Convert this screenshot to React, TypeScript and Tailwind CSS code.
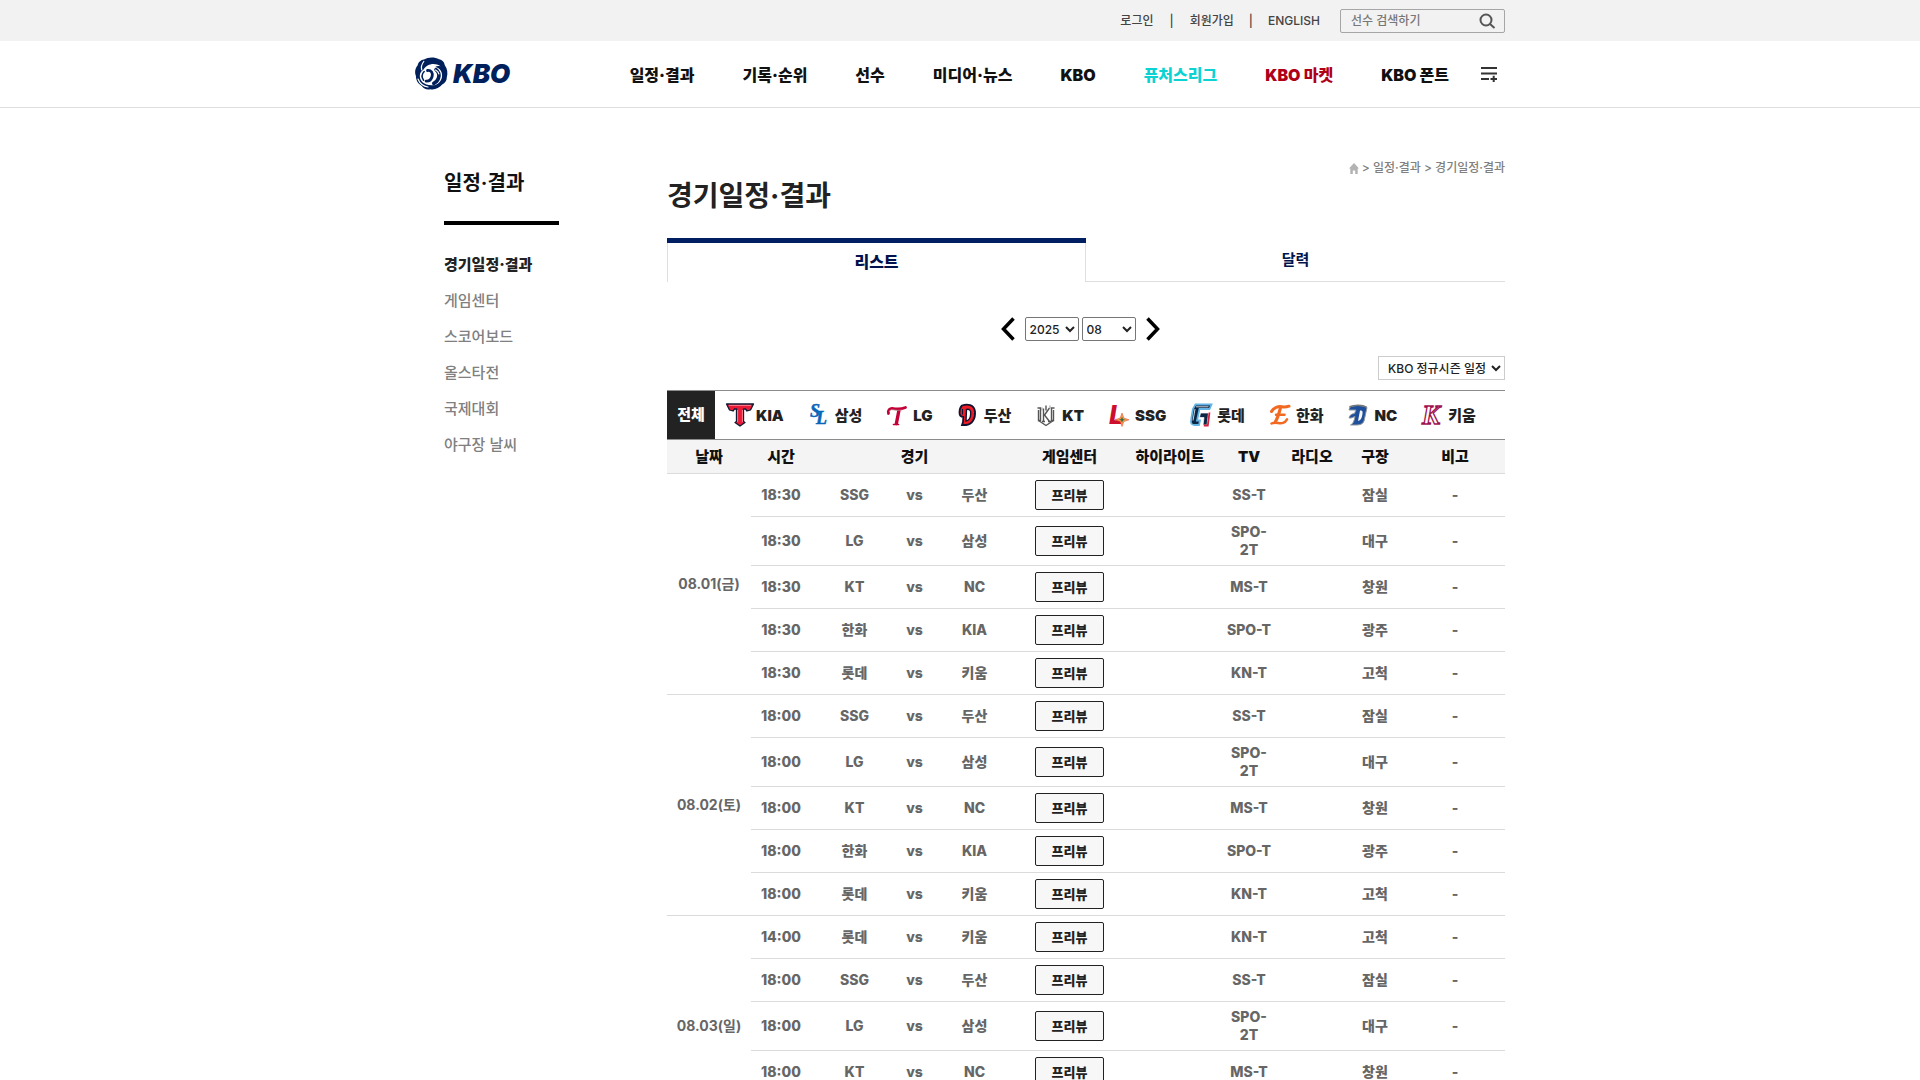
import React from "react";

type Game = { time: string; home: string; away: string; tv: string; park: string };

const fixtures = {
  ssg: { home: "SSG", away: "두산", tv: "SS-T", park: "잠실" },
  lg: { home: "LG", away: "삼성", tv: "SPO-2T", park: "대구" },
  kt: { home: "KT", away: "NC", tv: "MS-T", park: "창원" },
  hanwha: { home: "한화", away: "KIA", tv: "SPO-T", park: "광주" },
  lotte: { home: "롯데", away: "키움", tv: "KN-T", park: "고척" },
};

const days: { date: string; games: Game[] }[] = [
  {
    date: "08.01(금)",
    games: [
      { time: "18:30", ...fixtures.ssg },
      { time: "18:30", ...fixtures.lg },
      { time: "18:30", ...fixtures.kt },
      { time: "18:30", ...fixtures.hanwha },
      { time: "18:30", ...fixtures.lotte },
    ],
  },
  {
    date: "08.02(토)",
    games: [
      { time: "18:00", ...fixtures.ssg },
      { time: "18:00", ...fixtures.lg },
      { time: "18:00", ...fixtures.kt },
      { time: "18:00", ...fixtures.hanwha },
      { time: "18:00", ...fixtures.lotte },
    ],
  },
  {
    date: "08.03(일)",
    games: [
      { time: "14:00", ...fixtures.lotte },
      { time: "18:00", ...fixtures.ssg },
      { time: "18:00", ...fixtures.lg },
      { time: "18:00", ...fixtures.kt },
      { time: "18:00", ...fixtures.hanwha },
    ],
  },
];

const navItems = [
  { label: "일정·결과", tone: "text-[#111]" },
  { label: "기록·순위", tone: "text-[#111]" },
  { label: "선수", tone: "text-[#111]" },
  { label: "미디어·뉴스", tone: "text-[#111]" },
  { label: "KBO", tone: "text-[#111]" },
  { label: "퓨처스리그", tone: "text-[#0bd3d3]" },
  { label: "KBO 마켓", tone: "text-[#b00018]" },
  { label: "KBO 폰트", tone: "text-[#111]" },
];

const sideItems = ["게임센터", "스코어보드", "올스타전", "국제대회", "야구장 날씨"];

const SERIF = "'Liberation Serif', serif";
const SANS = "Inter, sans-serif";

function KboLogo() {
  return (
    <svg width="98" height="34" viewBox="0 0 98 34" role="img" aria-label="KBO" className="overflow-visible">
      <path
        fill="#00205b"
        d="M9 2.500C13-.2 20-.2 24 2.200c3 .3 5.400 3 5.800 6 2.600 3.200 3.200 8 2 12 .2 3-1.800 6-4.600 7.400-3 3.800-7.600 5.400-12 4.600-3.400.8-6.600-.6-8.400-3.200C3 27 .8 23 .9 18.800-.6 15.500.2 11 2.600 8.600 3 5.400 6 2.700 9 2.500Z"
      />
      <path fill="#fff" d="M8.600 12.500c3-5.500 11-7.600 17-3.200-2-.6-4-.4-5.400.6 4.800 1.200 7.600 5 6.800 10-.8 5-5 8.600-10 8.400C9.500 28.500 4.500 24 4.800 18.500c.1-2.400 1.600-4.600 3.800-6Z" />
      <path fill="none" stroke="#00205b" strokeWidth="2.800" strokeLinecap="round" d="M12.500 13.500c3.800-.4 5.600 2.500 4.600 6-.8 3-3 4.800-6 4.600" />
      <path fill="none" stroke="#00205b" strokeWidth="1.500" strokeLinecap="round" d="M9.200 14.500c-2.400 2.500-2.600 6-.6 8.800" />
      <path fill="none" stroke="#00205b" strokeWidth="3.600" strokeLinecap="round" d="M21 12.600c2.800 2.200 3.600 5.400 2.400 8.800-.8 2.400-2.600 4-4.600 5" />
      <path fill="none" stroke="#fff" strokeWidth="1.200" strokeLinecap="round" d="M20.500 13c1.800.8 3 2.200 3.400 4M8.800 4.500C6.400 7.500 6 10.500 6.800 13M3 22c1.800 4.600 5.600 7.400 10 8" />
      <text x="38" y="25.500" fontFamily={SANS} fontSize="26" fontWeight="900" fontStyle="italic" fill="#00205b">
        KBO
      </text>
    </svg>
  );
}

function Badge({ children }: { children: React.ReactNode }) {
  return (
    <svg width="30" height="26" viewBox="0 0 30 26" aria-hidden="true" className="shrink-0 overflow-visible">
      {children}
    </svg>
  );
}

const teams: { name: string; mark: React.ReactNode }[] = [
  {
    name: "KIA",
    mark: (
      <Badge>
        <path
          d="M1.500 2h27l-3 6-3.500 1-1.500-2H18.500v12.500l1.500 1-5 3.500-5-3.500 1.500-1V7H9.500l-1.500 2L4.500 8Z"
          fill="#ea1a36"
          stroke="#0c1a33"
          strokeWidth="1.300"
          strokeLinejoin="round"
        />
        <path d="M4 3.400h22M12.600 8v12M17.400 8v12" stroke="#ff9aa6" strokeWidth=".8" fill="none" />
      </Badge>
    ),
  },
  {
    name: "삼성",
    mark: (
      <Badge>
        <text x="6" y="15" fontFamily={SERIF} fontWeight="700" fontStyle="italic" fontSize="18" fill="#0a66b8" stroke="#0a66b8" strokeWidth=".5">
          S<tspan dx="-4" dy="7">L</tspan>
        </text>
      </Badge>
    ),
  },
  {
    name: "LG",
    mark: (
      <Badge>
        <g fill="none" stroke="#c30037" strokeLinecap="round">
          <path d="M6.500 11.500C5.500 8 8 6 11 6.500c4 .8 8 .9 12.500-1" strokeWidth="2.800" />
          <path d="m17 8-2.600 13.500" strokeWidth="3.400" />
          <path d="M11.500 22.500h5" strokeWidth="1.600" />
        </g>
        <path d="M7.500 10c0-2 1.500-2.600 3.500-2.200 3 .6 6 .8 9 .2" stroke="#b9a0a8" strokeWidth=".7" fill="none" />
      </Badge>
    ),
  },
  {
    name: "두산",
    mark: (
      <Badge>
        <path
          d="M9 3.500c5.500-2 12-.8 13 6 .7 7-3 13-9 13.500H9l1-3 .3-5C8 15 6.500 13.500 6.500 10.500c0-3 1-5.500 2.500-7Z"
          fill="#ed1c24"
          stroke="#131230"
          strokeWidth="1.800"
        />
        <path d="M13.500 7.500c3-.8 4.500 1 4.200 4.500-.2 4-1.800 6.500-4.700 7Z" fill="#fff" stroke="#131230" strokeWidth="1.400" />
        <path d="M9.500 12.500V7" stroke="#131230" strokeWidth="1" />
      </Badge>
    ),
  },
  {
    name: "KT",
    mark: (
      <Badge>
        <g fill="none" stroke="#555" strokeWidth="1.400">
          <path d="M6.500 6h3v12.500h-2V8M23.500 6h-3v12.500h2V8" />
          <path d="M7.500 18.500 15 23.500l7.500-5" />
          <path d="M12.500 6.500v13M15 3.500v5M18.500 6l-5 7 5 6.500M11 19.500h3M17 19.500h3" />
        </g>
        <path d="M11 5.500v3M19 3.500v3" stroke="#999" strokeWidth="1" />
      </Badge>
    ),
  },
  {
    name: "SSG",
    mark: (
      <Badge>
        <text x="5" y="22" fontFamily={SANS} fontSize="26" fontWeight="800" fontStyle="italic" fill="#ce0e2d">
          L
        </text>
        <path d="m18 11 1.800 5 5.200 1.800-5.200 1.800L18 24.500l-1.800-4.900-5.200-1.800 5.200-1.800Z" fill="#f6a04a" stroke="#e0402f" strokeWidth=".5" />
        <path d="m18 14.800.9 2.200 2.100.8-2.100.8-.9 2.200-.9-2.200-2.100-.8 2.100-.8Z" fill="#2f6b45" />
      </Badge>
    ),
  },
  {
    name: "롯데",
    mark: (
      <Badge>
        <path d="M9.500 2.500h16l-2 4.500h-10l-2.500 11.500h3l-1 4.500H8.500c-3 0-4-2-3.400-5l1.800-11Z" fill="#0b2545" stroke="#63b4e4" strokeWidth="1.800" />
        <path d="M10 4.800h12.500M9 7l-2 11.500" stroke="#fff" strokeWidth=".8" fill="none" />
        <path d="M14.500 11H22.500l-1.500 12h-4l1-7.500h-4.500Z" fill="#0b2545" stroke="#fff" strokeWidth=".7" />
        <path d="m23.500 10.500-1.700 13h-4" stroke="#d4213d" strokeWidth="1.800" fill="none" />
      </Badge>
    ),
  },
  {
    name: "한화",
    mark: (
      <Badge>
        <g fill="none" stroke="#f26a21" strokeLinecap="round">
          <path d="M6.500 9.500c2-4 7-5.500 10.500-4.700 2 .5 4.500.3 7-.6" strokeWidth="3" />
          <path d="M15.500 5.500c-1 4-2 9-5 14" strokeWidth="3.200" />
          <path d="M11 12.800h8.500M6.500 21.500c4-2 8 .6 11.500-.6 1.800-.6 3-1.800 4-3.600" strokeWidth="2.500" />
        </g>
      </Badge>
    ),
  },
  {
    name: "NC",
    mark: (
      <Badge>
        <path d="M7 5c5-2 12-2 17 .5L21 19c-1 3-4 4-8 4H7.500c2.500-1 3.800-4 4.500-8.500L8 16H6c1-3 2-4 5.500-4.500L13 8H6Z" fill="#1d4f9c" stroke="#8d949b" strokeWidth="1" />
        <path d="M17 8.500c2.500-.4 3 1 2.400 4-.6 3.500-1.700 6-4.400 6.500Z" fill="#f4f6f8" />
        <path d="M6.500 4.800c5-2 13-2 17 .3" stroke="#777" strokeWidth="1.500" fill="none" />
      </Badge>
    ),
  },
  {
    name: "키움",
    mark: (
      <Badge>
        <text
          x="5"
          y="22"
          fontFamily={SERIF}
          fontSize="27"
          fontWeight="700"
          fontStyle="italic"
          fill="#fff"
          stroke="#a01050"
          strokeWidth="1.300"
        >
          K
        </text>
      </Badge>
    ),
  },
];

const columns = [
  { label: "날짜", width: "w-[84px]" },
  { label: "시간", width: "w-[60px]" },
  { label: "경기", width: "w-[207px]" },
  { label: "게임센터", width: "w-[103px]" },
  { label: "하이라이트", width: "w-[98px]" },
  { label: "TV", width: "w-[60px]" },
  { label: "라디오", width: "w-[66px]" },
  { label: "구장", width: "w-[60px]" },
  { label: "비고", width: "w-[100px]" },
];

function TopBar() {
  return (
    <div className="bg-[#f2f2f2]">
      <div className="mx-auto flex h-[41px] max-w-[1090px] items-center justify-end text-[12px] font-medium text-[#444]">
        <a href="#login">로그인</a>
        <span className="mx-4">|</span>
        <a href="#join">회원가입</a>
        <span className="mx-[15px]">|</span>
        <a href="#english">ENGLISH</a>
        <form className="ml-5 flex h-6 w-[165px] items-center rounded-[2px] border border-[#a6a6a6] pr-2 pl-2.5">
          <input
            aria-label="선수 검색"
            placeholder="선수 검색하기"
            className="min-w-0 flex-1 bg-transparent text-[12px] outline-none placeholder:text-[#777]"
          />
          <button type="button" aria-label="검색">
            <svg width="18" height="18" viewBox="0 0 18 18" fill="none" stroke="#555" strokeWidth="2">
              <circle cx="8" cy="8" r="5.500" />
              <path d="m12 12 4.500 4" />
            </svg>
          </button>
        </form>
      </div>
    </div>
  );
}

function Header() {
  return (
    <header className="border-b border-[#dedede]">
      <div className="mx-auto flex h-[66px] max-w-[1090px] items-center justify-between">
        <a href="#home">
          <KboLogo />
        </a>
        <div className="flex items-center pr-2">
          <nav className="flex gap-12 pt-0.5 text-[16px] font-black">
            {navItems.map((n) => (
              <a key={n.label} href="#nav" className={n.tone}>
                {n.label}
              </a>
            ))}
          </nav>
          <button type="button" aria-label="전체 메뉴" className="ml-8">
            <svg width="16" height="16" viewBox="0 0 16 16" stroke="#333" strokeWidth="2" fill="none">
              <path d="M0 2h16M0 7.500h16M0 13h8M9.500 13H16M12.700 9.800v6.200" />
            </svg>
          </button>
        </div>
      </div>
    </header>
  );
}

function Sidebar() {
  return (
    <aside className="w-[115px] shrink-0 pt-[60px]">
      <h2 className="text-[20px] leading-[30px] font-bold text-[#111]">일정·결과</h2>
      <div className="mt-[23px] h-1 bg-black" />
      <ul className="mt-[22px] text-[15px] leading-9 font-medium text-[#808080]">
        <li>
          <a href="#schedule" className="font-black whitespace-nowrap text-[#222]">
            경기일정·결과
          </a>
        </li>
        {sideItems.map((s) => (
          <li key={s}>
            <a href="#side">{s}</a>
          </li>
        ))}
      </ul>
    </aside>
  );
}

function Arrow({ flip }: { flip?: boolean }) {
  return (
    <svg width="14" height="24" viewBox="0 0 14 24" fill="none" stroke="#000" strokeWidth="3.500" className={flip ? "rotate-180" : ""}>
      <path d="M12.500 1.500 2.500 12l10 10.500" />
    </svg>
  );
}

function Schedule() {
  return (
    <table className="w-full table-fixed text-center text-[14px] leading-[18px] font-extrabold text-[#666]">
      <thead className="bg-[#f4f4f4] text-[15px] font-black text-[#111]">
        <tr>
          {columns.map((c) => (
            <th key={c.label} scope="col" className={`${c.width} h-[33px] border-b border-[#dbdbdb] pt-0.5 font-black whitespace-nowrap`}>
              {c.label}
            </th>
          ))}
        </tr>
      </thead>
      <tbody>
        {days.map((d) =>
          d.games.map((g, i) => (
            <tr key={d.date + i} className="border-b border-[#dbdbdb]">
              {i === 0 && (
                <td rowSpan={d.games.length} className="font-bold">
                  {d.date}
                </td>
              )}
              <td>{g.time}</td>
              <td>
                <div className="flex justify-center">
                  <span className="w-[60px]">{g.home}</span>
                  <span className="w-[60px]">vs</span>
                  <span className="w-[60px]">{g.away}</span>
                </div>
              </td>
              <td className="py-1.5">
                <a
                  href="#preview"
                  className="mx-auto flex h-[30px] w-[69px] items-center justify-center rounded-[2px] border border-[#222] bg-[#f7f7f7] text-[13px] font-black text-[#222]"
                >
                  프리뷰
                </a>
              </td>
              <td />
              <td className="px-[5px] py-1.5">{g.tv}</td>
              <td />
              <td>{g.park}</td>
              <td>-</td>
            </tr>
          )),
        )}
      </tbody>
    </table>
  );
}

export default function App() {
  return (
    <div className="bg-white font-['Inter','Noto_Sans_CJK_KR',sans-serif]">
      <TopBar />
      <Header />
      <div className="mx-auto flex max-w-[1090px] justify-between pl-[29px]">
        <Sidebar />
        <main className="w-[838px]">
          <div className="flex justify-end pt-[51px]">
            <div className="flex h-[18px] items-center gap-[3px] text-[12px] leading-[18px] font-medium text-[#808080]">
              <a href="#home" aria-label="홈">
                <svg width="10" height="11" viewBox="0 0 10 11" fill="#b3b3b3">
                  <path d="M5 0 10 5.500H8.700V11H6.200V7.500H3.800V11H1.300V5.500H0Z" />
                </svg>
              </a>
              <span>&gt; 일정·결과 &gt; 경기일정·결과</span>
            </div>
          </div>
          <h1 className="mt-px text-[28px] leading-9 font-bold text-[#222]">경기일정·결과</h1>
          <div role="tablist" className="mt-6 flex h-11 text-[16px] text-[#00134d]">
            <button role="tab" aria-selected="true" type="button" className="flex flex-1 flex-col">
              <span className="h-[5px] w-full bg-[#001e62]" />
              <span className="flex w-full flex-1 items-center justify-center border-x border-[#dedede] pb-0.5 font-black">리스트</span>
            </button>
            <button role="tab" aria-selected="false" type="button" className="flex-1 border-b border-[#dedede] pt-0.5 text-[15px] font-bold">
              달력
            </button>
          </div>
          <div className="mt-[35px] flex items-center justify-center pr-3 text-[12px] font-medium text-[#222]">
            <button type="button" aria-label="이전 달" className="mr-2.5">
              <Arrow />
            </button>
            <select aria-label="연도" className="h-6 w-[54px] rounded-[2px] border border-[#767676] bg-white">
              <option>2025</option>
            </select>
            <select aria-label="월" className="ml-[3px] h-6 w-[54px] rounded-[2px] border border-[#767676] bg-white">
              <option>08</option>
            </select>
            <button type="button" aria-label="다음 달" className="ml-2.5">
              <Arrow flip />
            </button>
          </div>
          <div className="mt-[15px] flex justify-end">
            <select aria-label="일정 구분" className="h-6 w-[127px] border border-[#ccc] bg-white pl-[5px] text-[12px] font-medium text-[#222]">
              <option>KBO 정규시즌 일정</option>
            </select>
          </div>
          <ul className="mt-2.5 flex h-[50px] border-y border-[#8c8c8c] text-[15px] font-black text-[#222]">
            <li className="flex">
              <a href="#all" className="flex w-12 items-center justify-center bg-[#222] text-white">
                전체
              </a>
            </li>
            {teams.map((t) => (
              <li key={t.name} className="flex">
                <a href="#team" className="flex items-center px-2.5">
                  {t.mark}
                  <span className="pt-0.5 pl-px">{t.name}</span>
                </a>
              </li>
            ))}
          </ul>
          <Schedule />
        </main>
      </div>
    </div>
  );
}
